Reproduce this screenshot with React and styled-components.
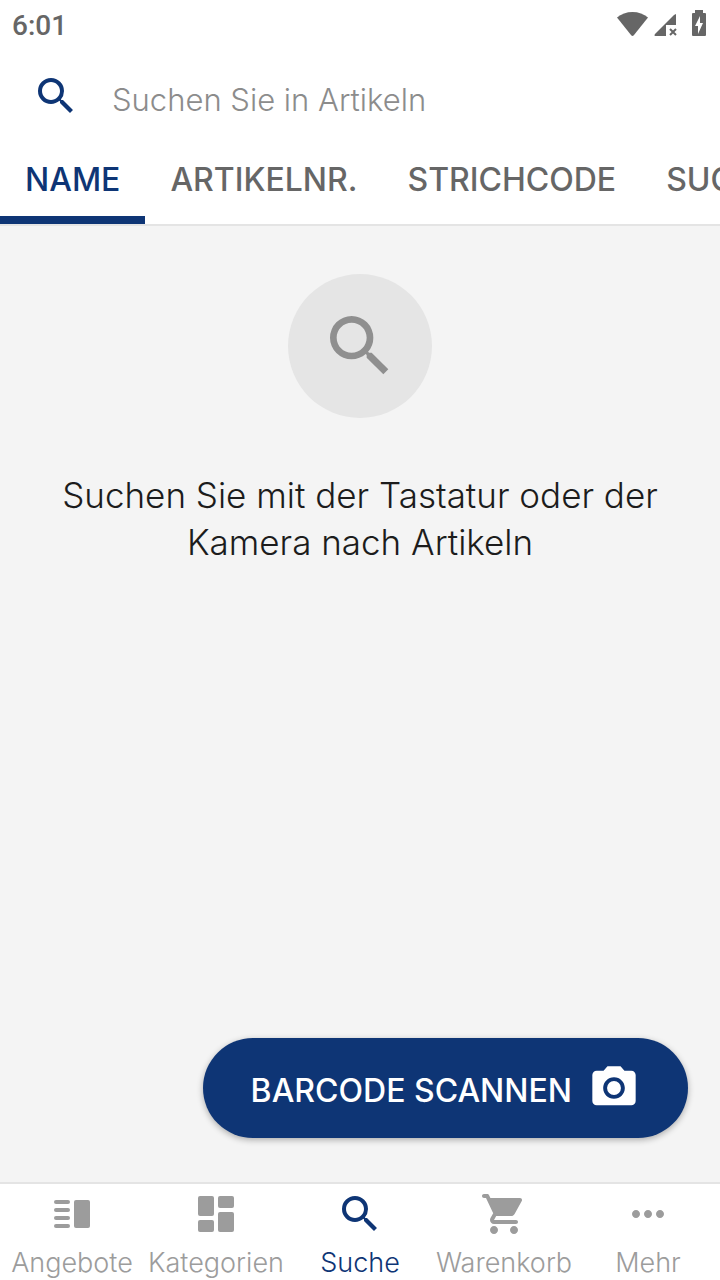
import React, { useState } from 'react';
import styled, { createGlobalStyle } from 'styled-components';
import { MdSearch, MdPhotoCamera, MdMoreHoriz } from 'react-icons/md';

const navy = '#0e3575';

const GlobalStyle = createGlobalStyle`
  * {
    box-sizing: border-box;
  }

  body {
    margin: 0;
    background: #f4f4f4;
    font-family: Inter, "Liberation Sans", sans-serif;
    font-weight: 300;
  }

  button, input {
    margin: 0;
    padding: 0;
    border: 0;
    background: none;
    font: inherit;
  }
`;

const Screen = styled.div`
  display: flex;
  flex-direction: column;
  min-height: 100vh;
`;

const Header = styled.header`
  background: #fff;
  border-bottom: 2px solid #e4e4e4;
`;

const StatusBar = styled.div`
  display: flex;
  align-items: center;
  justify-content: space-between;
  height: 48px;
  padding: 0 12px;
  color: #666;
`;

const Clock = styled.time`
  padding-top: 4px;
  font-family: Roboto, sans-serif;
  font-size: 28px;
  font-weight: 500;
  line-height: 32px;
`;

const SearchBar = styled.label`
  display: flex;
  align-items: center;
  gap: 32px;
  height: 96px;
  padding: 0 32px;
  color: ${navy};
`;

const SearchInput = styled.input`
  flex: 1;
  min-width: 0;
  height: 48px;
  padding-top: 6px;
  outline: none;
  color: #222;
  font-size: 31px;

  &::placeholder {
    color: #8c8c8c;
    opacity: 1;
  }
`;

const TabList = styled.div`
  display: flex;
  height: 80px;
  overflow: hidden;
`;

const Tab = styled.button`
  flex: none;
  padding: 0 25px 2px;
  border-bottom: 8px solid ${props => (props.$active ? navy : 'transparent')};
  color: ${props => (props.$active ? navy : '#666')};
  font-size: 32px;
  font-weight: 500;
  white-space: nowrap;
`;

const Content = styled.main`
  flex: 1;
  display: flex;
  flex-direction: column;
  align-items: center;
  padding: 48px 32px 44px;
`;

const Badge = styled.div`
  display: flex;
  align-items: center;
  justify-content: center;
  width: 144px;
  height: 144px;
  border-radius: 50%;
  background: #e5e5e5;
  color: #8f8f8f;
`;

const Hint = styled.p`
  margin: 54px 0 0;
  color: #1c1c1c;
  font-size: 35px;
  line-height: 47px;
  text-align: center;
`;

const ScanButton = styled.button`
  display: flex;
  align-items: center;
  gap: 16px;
  height: 100px;
  margin-top: auto;
  margin-left: auto;
  padding: 0 48px;
  border-radius: 50px;
  background: ${navy};
  box-shadow: 0 2px 6px rgba(0, 0, 0, 0.3);
  color: #fff;
  font-size: 32px;
  font-weight: 500;
`;

const ScanLabel = styled.span`
  padding-top: 4px;
`;

const BottomNav = styled.nav`
  display: grid;
  grid-template-columns: repeat(5, 1fr);
  height: 98px;
  background: #fff;
  border-top: 2px solid #e4e4e4;
`;

const NavItem = styled.button`
  display: flex;
  flex-direction: column;
  align-items: center;
  gap: 8px;
  padding-top: 6px;
  min-width: 0;
  color: ${props => (props.$active ? navy : '#9c9c9c')};
  font-size: 27px;
  line-height: 34px;
  white-space: nowrap;
`;

const StatusIcons = () => (
  <svg width="92" height="28" viewBox="0 0 92 28" fill="currentColor" aria-hidden="true">
    <path d="M1 7.5C9 0 24 0 32 7.5L17.8 25.2Q16.5 26.8 15.2 25.2Z" />
    <path d="M60 4v11H50v11H40Q37.5 26 39 24L58 5Z" />
    <path d="M54 19l6 6M60 19l-6 6" stroke="currentColor" strokeWidth="2" />
    <path
      fillRule="evenodd"
      d="M79 0h8v3h2q1 0 1 1v21q0 1-1 1H77q-1 0-1-1V4q0-1 1-1h2zM84 6l-5 10h3v8l5-11h-3z"
    />
  </svg>
);

const OffersIcon = () => (
  <svg width="48" height="48" viewBox="0 0 24 24" fill="currentColor" aria-hidden="true">
    <rect x="3" y="5" width="8" height="2" rx="1" />
    <rect x="3" y="9" width="8" height="2" rx="1" />
    <rect x="3" y="13" width="8" height="2" rx="1" />
    <rect x="3" y="17" width="8" height="2" rx="1" />
    <rect x="13" y="5" width="8" height="14" rx="1" />
  </svg>
);

const CategoriesIcon = () => (
  <svg width="48" height="48" viewBox="0 0 24 24" fill="currentColor" aria-hidden="true">
    <rect x="3" y="3" width="8" height="10" rx="1" />
    <rect x="3" y="15" width="8" height="6" rx="1" />
    <rect x="13" y="3" width="8" height="6" rx="1" />
    <rect x="13" y="11" width="8" height="10" rx="1" />
  </svg>
);

const CartIcon = () => (
  <svg width="48" height="48" viewBox="0 0 24 24" fill="currentColor" aria-hidden="true">
    <path d="M7 18c-1.1 0-1.99.9-1.99 2S5.9 22 7 22s2-.9 2-2-.9-2-2-2zM1 3c0 .55.45 1 1 1h1l3.6 7.59-1.35 2.44C4.52 15.37 5.48 17 7 17h11c.55 0 1-.45 1-1s-.45-1-1-1H7l1.1-2h7.45c.75 0 1.41-.41 1.75-1.03l3.58-6.49c.37-.66-.11-1.48-.87-1.48H5.21l-.67-1.43c-.16-.35-.52-.57-.9-.57H2c-.55 0-1 .45-1 1zm16 15c-1.1 0-1.99.9-1.99 2s.89 2 1.99 2 2-.9 2-2-.9-2-2-2z" />
  </svg>
);

const tabs = ['NAME', 'ARTIKELNR.', 'STRICHCODE', 'SUCHCODE'];

const navItems = [
  { label: 'Angebote', icon: <OffersIcon /> },
  { label: 'Kategorien', icon: <CategoriesIcon /> },
  { label: 'Suche', icon: <MdSearch size={48} /> },
  { label: 'Warenkorb', icon: <CartIcon /> },
  { label: 'Mehr', icon: <MdMoreHoriz size={48} /> },
];

export default function App() {
  const [tab, setTab] = useState('NAME');
  const [page, setPage] = useState('Suche');

  return (
    <Screen>
      <GlobalStyle />
      <Header>
        <StatusBar>
          <Clock>6:01</Clock>
          <StatusIcons />
        </StatusBar>
        <SearchBar>
          <MdSearch size={48} />
          <SearchInput type="text" placeholder="Suchen Sie in Artikeln" aria-label="Suchen Sie in Artikeln" />
        </SearchBar>
        <TabList role="tablist">
          {tabs.map(name => (
            <Tab key={name} role="tab" aria-selected={name === tab} $active={name === tab} onClick={() => setTab(name)}>
              {name}
            </Tab>
          ))}
        </TabList>
      </Header>
      <Content>
        <Badge>
          <MdSearch size={80} />
        </Badge>
        <Hint>Suchen Sie mit der Tastatur oder der Kamera nach Artikeln</Hint>
        <ScanButton>
          <ScanLabel>BARCODE SCANNEN</ScanLabel>
          <MdPhotoCamera size={52} />
        </ScanButton>
      </Content>
      <BottomNav>
        {navItems.map(({ label, icon }) => (
          <NavItem key={label} $active={label === page} onClick={() => setPage(label)}>
            {icon}
            {label}
          </NavItem>
        ))}
      </BottomNav>
    </Screen>
  );
}
